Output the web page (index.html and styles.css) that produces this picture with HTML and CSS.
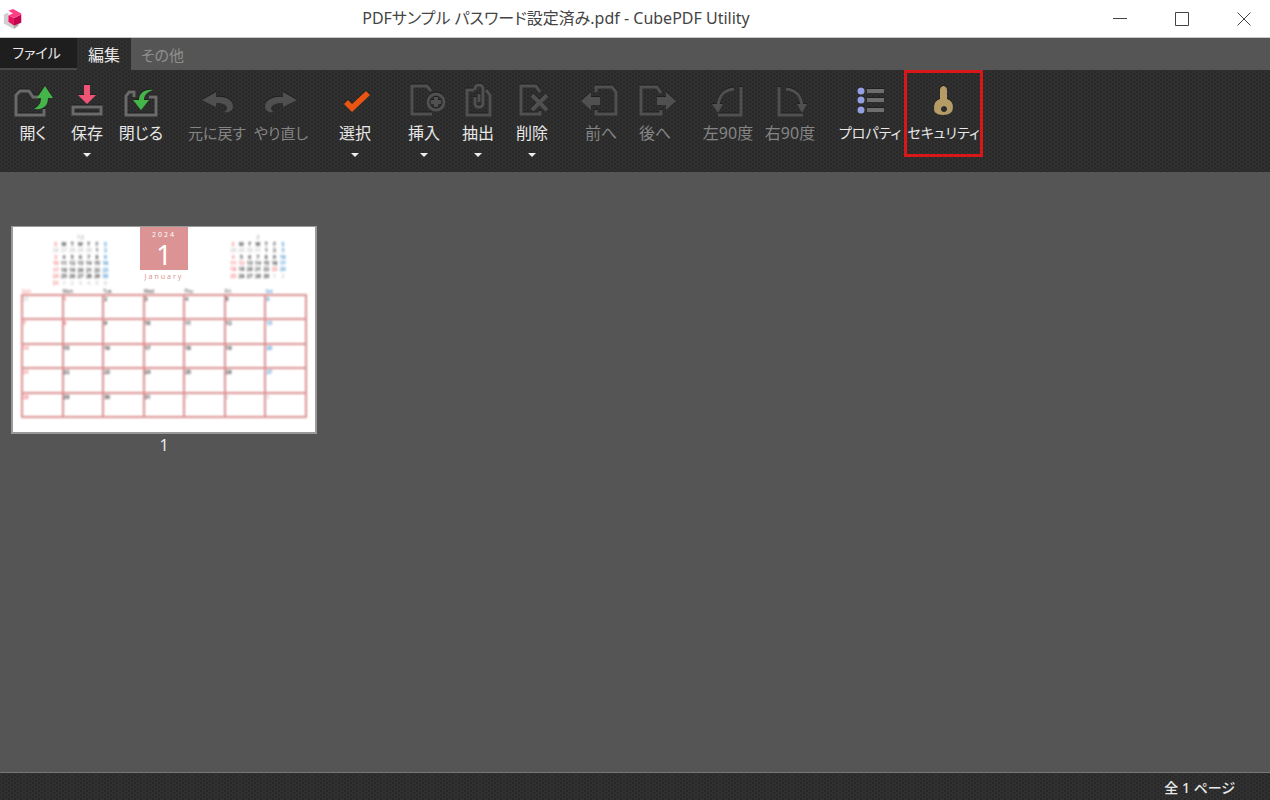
FILE: index.html
```html
<!DOCTYPE html>
<html lang="ja">
<head>
<meta charset="utf-8">
<title>PDFサンプル パスワード設定済み.pdf - CubePDF Utility</title>
<link rel="stylesheet" href="styles.css">
</head>
<body>
<div class="app">
  <header class="titlebar">
    <svg class="logo" viewBox="0 0 22 24" aria-hidden="true">
      <path d="M1 7l5-2v9l6 3v6L1 17z" fill="#cfcfcf"/>
      <path d="M12 17l5-2v4l-5 4z" fill="#a9a9a9"/>
      <path d="M6 8l6 3v8l-6-4z" fill="#e9115f"/>
      <path d="M12 11l8-4v9l-8 3z" fill="#c4044f"/>
      <path d="M6 3l5-2 9 5v1l-8 4-6-3 5-2z" fill="#ff3f86"/>
    </svg>
    <h1 class="title">PDFサンプル パスワード設定済み.pdf - CubePDF Utility</h1>
    <div class="window-buttons">
      <button class="win" aria-label="最小化"><svg viewBox="0 0 16 16"><path d="M1 7.5h14"/></svg></button>
      <button class="win" aria-label="最大化"><svg viewBox="0 0 16 16"><path d="M1.500 1.500h13v13h-13z"/></svg></button>
      <button class="win" aria-label="閉じる"><svg viewBox="0 0 16 16"><path d="M1.500 1.500l13 13M14.500 1.500l-13 13"/></svg></button>
    </div>
  </header>

  <nav class="tabs">
    <button class="tab tab-file">ファイル</button>
    <button class="tab tab-active textured">編集</button>
    <button class="tab tab-other">その他</button>
  </nav>

  <div class="ribbon textured">
    <div class="group">
      <button class="tool">
        <svg class="icon" viewBox="0 0 40 40"><path class="line" d="M31 28v6H3V14l4-4h9l4 6h6"/><path d="M32 5l8 12h-5c0 8-5 12-14 11 5-3 7-6 7-11h-4z" fill="#44b649"/></svg>
        <span>開く</span></button>
      <button class="tool">
        <svg class="icon" viewBox="0 0 40 40"><path class="line" d="M6 26h28v7H6z"/><path d="M17 4h6v10h6l-9 9-9-9h6z" fill="#ee5476"/></svg>
        <span>保存</span><i class="caret"></i></button>
      <button class="tool">
        <svg class="icon" viewBox="0 0 40 40"><path class="line" d="M13 16V11H8l-3 4v19h30V16h-7"/><path d="M32 9c-8-1-14 3-14 10h-6l8 10 8-10h-5c0-5 3-8 9-10z" fill="#44b649"/></svg>
        <span>閉じる</span></button>
    </div>
    <div class="group group-undo">
      <button class="tool" disabled>
        <svg class="icon" viewBox="0 0 40 40"><path class="dim-fill" d="M5 19l14-8v5c11-1 17 4 17 9s-4 7-9 6c5-3 5-9-8-9v4z"/></svg>
        <span>元に戻す</span></button>
      <button class="tool" disabled>
        <svg class="icon" viewBox="0 0 40 40"><path class="dim-fill" d="M36 19l-14-8v5C11 15 4 20 4 25s4 7 9 6c-5-3-4-9 9-9v4z"/></svg>
        <span>やり直し</span></button>
    </div>
    <div class="group">
      <button class="tool">
        <svg class="icon" viewBox="0 0 40 40"><path d="M9 23l4-4 4 4L31 10l4 4-18 17z" fill="#ea5514"/></svg>
        <span>選択</span><i class="caret"></i></button>
    </div>
    <div class="group">
      <button class="tool">
        <svg class="icon" viewBox="0 0 40 40"><path class="line dim" d="M28 33H8V5h15l4 5"/><circle class="line dim" cx="32" cy="21" r="8"/><path class="line dim thick" d="M27 21h10M32 16v10"/></svg>
        <span>挿入</span><i class="caret"></i></button>
      <button class="tool">
        <svg class="icon" viewBox="0 0 40 40"><path class="line dim" d="M16 9H9v25h23V14l-4-5"/><path class="line dim" d="M17 16v6q0 4 4 4t4-4V8q0-4-4-4t-4 4v1M21 21v-8"/></svg>
        <span>抽出</span><i class="caret"></i></button>
      <button class="tool">
        <svg class="icon" viewBox="0 0 40 40"><path class="line dim" d="M28 30v3H9V5h15l4 6"/><path class="line dim thick" d="M20 14l15 15M35 14L20 29"/></svg>
        <span>削除</span><i class="caret"></i></button>
    </div>
    <div class="group">
      <button class="tool" disabled>
        <svg class="icon" viewBox="0 0 40 40"><path class="line dim" d="M15 11V6h16l4 5v22H15v-4"/><path class="dim-fill" d="M0 20l10-9v5h9v8h-9v5z"/></svg>
        <span>前へ</span></button>
      <button class="tool" disabled>
        <svg class="icon" viewBox="0 0 40 40"><path class="line dim" d="M26 29v4H6V6h16l4 6"/><path class="dim-fill" d="M41 20l-10-9v5h-9v8h9v5z"/></svg>
        <span>後へ</span></button>
    </div>
    <div class="group group-rotate">
      <button class="tool" disabled>
        <svg class="icon" viewBox="0 0 40 40"><path class="line dim" d="M10 34h23V6M26 8C15 9 11 15 10 25"/><path class="dim-fill" d="M4 23h11l-5 9z"/></svg>
        <span>左90度</span></button>
      <button class="tool" disabled>
        <svg class="icon" viewBox="0 0 40 40"><path class="line dim" d="M9 6v28h24M16 8c11 1 15 7 16 17"/><path class="dim-fill" d="M27 23h10l-5 9z"/></svg>
        <span>右90度</span></button>
    </div>
    <div class="group">
      <button class="tool tool-property">
        <svg class="icon" viewBox="0 0 40 40"><path d="M17 8h17v4H17zM17 17h17v4H17zM17 27h17v4H17z" fill="#6e6e6e"/><g fill="#949fe2"><circle cx="11" cy="10" r="3.500"/><circle cx="11" cy="19" r="3.500"/><circle cx="11" cy="29" r="3.500"/></g></svg>
        <span>プロパティ</span></button>
      <button class="tool tool-security">
        <svg class="icon" viewBox="0 0 40 40"><path fill-rule="evenodd" d="M16 9q0-3 3-4h1q3 1 3 4v9q6 2 6 8 0 8-10 8T10 26q0-6 6-8zM20 25a3 3 0 1 0 .01 0z" fill="#b59c67"/></svg>
        <span>セキュリティ</span></button>
    </div>
  </div>

  <main class="workspace">
    <figure class="page">
      <div class="sheet">
        <div class="sheet-head">
          <div class="mini" id="previous"></div>
          <div class="month">
            <div class="badge"><span class="year">2024</span><span class="number">1</span></div>
            <div class="name">January</div>
          </div>
          <div class="mini mini-next" id="next"></div>
        </div>
        <div class="grid-wrap" id="current"></div>
      </div>
      <figcaption>1</figcaption>
    </figure>
  </main>

  <footer class="status textured">全 1 ページ</footer>
</div>
<script src="calendar.js"></script>
</body>
</html>
```
FILE: styles.css
```css
* { box-sizing: border-box; }
body {
  margin: 0;
  font-family: "Noto Sans", "Noto Sans CJK JP", sans-serif;
  font-size: 16px;
  font-feature-settings: "palt";
  color: #e8e8e8;
  background: #555;
}
button { font: inherit; font-feature-settings: inherit; color: inherit; border: 0; padding: 0; background: none; }
.app { display: flex; flex-direction: column; min-height: 100vh; }
.textured {
  background-color: #303030;
  background-image:
    radial-gradient(circle, #282828 1px, transparent 1px),
    radial-gradient(circle, #282828 1px, transparent 1px);
  background-size: 6px 4px;
  background-position: 0 0, 3px 2px;
}

.titlebar {
  display: grid;
  grid-template-columns: 186px 1fr 186px;
  align-items: center;
  height: 38px;
  color: #444;
  background: #fff;
  border-bottom: 1px solid #c8c8c8;
}
.logo { width: 22px; height: 22px; margin-left: 2px; }
.title { margin: 0; padding: 0 158px 2px 0; font-size: 16px; font-weight: 400; line-height: 24px; text-align: center; white-space: nowrap; }
.window-buttons { display: flex; }
.win { display: flex; flex: 1; align-items: center; justify-content: center; height: 36px; }
.win svg { width: 16px; height: 16px; fill: none; stroke: #444; stroke-width: 1; }
.window-buttons { position: relative; }
.titlebar .win { justify-content: flex-end; padding-right: 18px; }

.tabs { display: flex; align-items: stretch; height: 32px; background: #555; }
.tab { line-height: 34px; }
.tab-file { width: 77px; padding-right: 4px; font-size: 14px; line-height: 30px; background: #1e1e1e; border-bottom: 2px solid #484848; }
.tab-active { width: 54px; }
.tab-other { padding: 0 10px; font-size: 15px; color: #8f8f8f; }

.ribbon { display: flex; gap: 15px; height: 102px; padding-left: 6px; }
.group { display: flex; align-items: flex-start; }
.tool {
  display: flex;
  flex-direction: column;
  align-items: center;
  width: 54px;
  height: 87px;
  padding-top: 11px;
  white-space: nowrap;
}
.tool:disabled { color: #858585; }
.tool span { line-height: 24px; }
.group-undo { margin-left: 2px; }
.group-undo .tool { width: 64px; font-size: 15px; }
.group-rotate .tool { width: 62px; }
.tool-property { width: 68px; font-size: 14px; }
.tool-security { width: 79px; padding-top: 8px; font-size: 14px; border: 3px solid #d81818; }
.icon { width: 40px; height: 40px; flex: none; overflow: visible; filter: drop-shadow(0 -1px 0 #1f1f1f); }
.line { fill: none; stroke: #6a6a6a; stroke-width: 3; }
.dim { stroke: #505050; }
.thick { stroke-width: 4; }
.dim-fill { fill: #505050; }
.caret { margin-top: 8px; border: 4px solid transparent; border-top: 4px solid #eee; border-bottom: 0; }

.workspace { flex: 1; padding: 54px 11px; }
.page { width: 306px; margin: 0; }
.sheet { height: 208px; padding: 0 8px; color: #333; background: #fff; border: 2px solid #999; border-top-width: 1px; }
.page figcaption { line-height: 22px; text-align: center; }
.sheet-head { display: grid; grid-template-columns: 1fr 48px 1fr; height: 62px; }
.mini { justify-self: center; width: 58px; padding-top: 6px; filter: blur(1px); }
.mini-next { justify-self: end; margin-right: 20px; }
.mini-title { height: 8px; font-size: 6px; line-height: 8px; text-align: center; color: #999; }
.mini table { width: 100%; border-collapse: collapse; table-layout: fixed; }
.mini td, .mini th { height: 6px; padding: 0; font-size: 5px; line-height: 6px; font-weight: 700; text-align: center; }
#previous table { height: 45px; }
#next table { height: 38px; }
.month { text-align: center; color: #db9393; }
.badge { display: flex; flex-direction: column; height: 43px; color: #fff; background: #db9393; }
.year { padding-top: 4px; font-size: 7px; line-height: 8px; letter-spacing: 2px; }
.number { font-size: 28px; line-height: 30px; }
.name { font-size: 7px; line-height: 14px; letter-spacing: 2px; }
.grid-wrap { filter: blur(1px); }
.month-grid { width: 100%; height: 129px; border-collapse: collapse; table-layout: fixed; }
.month-grid th, .month-grid td { padding: 0; font-size: 5px; text-align: left; font-weight: 700; vertical-align: top; }
.month-grid th { height: 5px; line-height: 5px; font-weight: 400; }
.month-grid td { height: 24px; line-height: 6px; border: 2px solid #dc9090; }
.sun { color: #f57b7b; }
.sat { color: #4291d5; }
.faint { color: #ccc; }

.status {
  height: 28px;
  padding: 1px 35px 0 0;
  font-size: 14px;
  font-weight: 500;
  line-height: 28px;
  text-align: right;
  border-top: 1px solid #777;
}
```
FILE: calendar.js
```js
const classFor = (column, faint, holiday) =>
  faint ? "faint" : holiday || column === 0 ? "sun" : column === 6 ? "sat" : "";

// lead: first visible day of the preceding month; offset: number of such days.
function buildTable(names, offset, lead, days, rows, holidays, tableClass) {
  const head = names.map((n, i) => `<th class="${classFor(i)}">${n}</th>`).join("");
  let body = "";
  for (let r = 0; r < rows; r++) {
    let cells = "";
    for (let c = 0; c < 7; c++) {
      const day = r * 7 + c - offset + 1;
      const outside = day < 1 || day > days;
      const label = day < 1 ? lead + c : day > days ? day - days : day;
      cells += `<td class="${classFor(c, outside, holidays.includes(day))}">${label}</td>`;
    }
    body += `<tr>${cells}</tr>`;
  }
  return `<table class="${tableClass}"><thead><tr>${head}</tr></thead><tbody>${body}</tbody></table>`;
}

const short = ["S", "M", "T", "W", "T", "F", "S"];
const long = ["Sun", "Mon", "Tue", "Wed", "Thu", "Fri", "Sat"];
document.getElementById("previous").innerHTML =
  '<div class="mini-title">12</div>' + buildTable(short, 5, 26, 31, 6, [], "mini-grid");
document.getElementById("next").innerHTML =
  '<div class="mini-title">2</div>' + buildTable(short, 4, 28, 29, 5, [12, 23], "mini-grid");
document.getElementById("current").innerHTML =
  buildTable(long, 1, 31, 31, 5, [1, 8], "month-grid");
```
